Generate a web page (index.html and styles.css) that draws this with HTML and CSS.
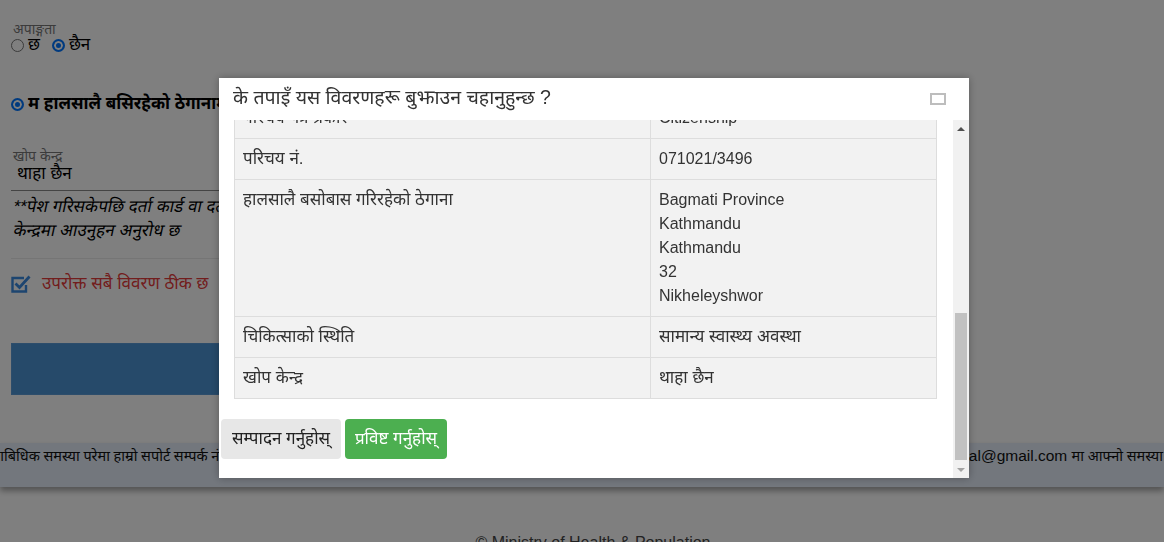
FILE: index.html
```html
<!DOCTYPE html>
<html lang="ne">
<head>
<meta charset="utf-8">
<title>खोप दर्ता</title>
<link rel="stylesheet" href="styles.css">
</head>
<body>
<div class="page">
  <div class="form">
    <div class="field-label">अपाङ्गता</div>
    <div class="radios">
      <label class="radio"><span class="rb"></span>छ</label>
      <label class="radio"><span class="rb on"></span>छैन</label>
    </div>

    <div class="addr-choice"><span class="rb on"></span>म हालसालै बसिरहेको ठेगानामा खोप लिन चाहन्छु</div>

    <div class="field-label gap">खोप केन्द्र</div>
    <div class="input-like">थाहा छैन</div>
    <p class="note"><span class="slant">**पेश गरिसकेपछि दर्ता कार्ड वा दर्ता नम्बर सहित आफ्नो नजिकको खोप</span><br><span class="slant">केन्द्रमा आउनुहन अनुरोध छ</span></p>
    <div class="rule"></div>

    <div class="confirm">
      <svg class="check" width="20" height="18" viewBox="0 0 20 18"><path d="M13 3H1.5v13.5h13.5V10" fill="none" stroke="#3a8ae0" stroke-width="2.4"/><path d="M4.5 8.5l4 4L18.5 1.5" fill="none" stroke="#3a8ae0" stroke-width="2.8"/></svg>
      <span class="confirm-text">उपरोक्त सबै विवरण ठीक छ</span>
    </div>

    <div class="submit-bar"></div>
  </div>

  <div class="support">
    <div class="support-line"><span class="sl-dv">प्राबिधिक समस्या परेमा हाम्रो सपोर्ट सम्पर्क नंः 9851255834, 9851255839 मा वा इमेल</span><span class="sl-mail">covid19vaccinenepal@gmail.com <span class="sl-dv2">मा आफ्नो समस्या राख्नुहोला ।</span></span></div>
  </div>

  <div class="copyright">© Ministry of Health &amp; Population</div>
</div>

<div class="overlay"></div>

<div class="dialog">
  <div class="dialog-head">
    <span class="dialog-title">के तपाइँ यस विवरणहरू बुझाउन चहानुहुन्छ ?</span>
    <svg class="max-icon" width="16" height="12" viewBox="0 0 16 12"><rect x="1" y="1" width="14" height="10" fill="none" stroke="#bdbdbd" stroke-width="2"/></svg>
  </div>
  <div class="dialog-body">
    <div class="scroll-area">
      <div class="scroll-content">
        <table class="details">
          <tr><td class="k">परिचय पत्र प्रकार</td><td class="lat">Citizenship</td></tr>
          <tr><td class="k">परिचय नं.</td><td class="lat">071021/3496</td></tr>
          <tr><td class="k">हालसालै बसोबास गरिरहेको ठेगाना</td><td class="lat">Bagmati Province<br>Kathmandu<br>Kathmandu<br>32<br>Nikheleyshwor</td></tr>
          <tr><td class="k">चिकित्साको स्थिति</td><td>सामान्य स्वास्थ्य अवस्था</td></tr>
          <tr><td class="k">खोप केन्द्र</td><td>थाहा छैन</td></tr>
        </table>
        <div class="actions">
          <button class="btn btn-edit">सम्पादन गर्नुहोस्</button>
          <button class="btn btn-submit">प्रविष्ट गर्नुहोस्</button>
        </div>
      </div>
    </div>
    <div class="scrollbar">
      <div class="sb-btn"><span class="arr up"></span></div>
      <div class="sb-track"><div class="sb-thumb"></div></div>
      <div class="sb-btn"><span class="arr down"></span></div>
    </div>
  </div>
</div>
</body>
</html>
```
FILE: styles.css
```css
* { box-sizing: border-box; }
html, body { margin: 0; padding: 0; }
body {
  background: #fff;
  font-family: "Liberation Sans", "Noto Sans", "Noto Sans Devanagari", sans-serif;
  font-size: 17px;
  line-height: 1.5;
  color: #333;
  width: 1164px;
  height: 542px;
  overflow: hidden;
}

.page { display: flex; flex-direction: column; }

.form { padding: 21px 0 0 11px; width: 920px; }

.field-label { font-size: 14px; line-height: 16px; color: #777; padding-left: 2px; }
.field-label.gap { margin-top: 32px; }

.radios { display: flex; gap: 12px; line-height: 20px; color: #000; margin-top: -2px; }
.radio { display: flex; align-items: center; gap: 4px; }
.rb {
  width: 13px; height: 13px; border-radius: 50%;
  border: 1px solid #767676; background: #fff; display: inline-block; flex: none;
}
.rb.on { border: 2px solid #0075ff; box-shadow: inset 0 0 0 2px #fff; background: #0075ff; }

.addr-choice {
  margin-top: 37px; display: flex; align-items: center; gap: 4px;
  font-weight: bold; color: #000; line-height: 24px; white-space: nowrap;
}

.input-like {
  margin-top: -2px;
  border-bottom: 1px solid #888; padding: 0 0 4px 6px; color: #000;
  line-height: 24px; width: 900px;
}

.note { margin: 4px 0 0 0; line-height: 24px; color: #000; white-space: nowrap; }
.slant { display: inline-block; transform: skewX(-12deg); transform-origin: 0 100%; }

.rule { margin-top: 15px; border-top: 1px solid #eaeaea; width: 900px; }

.confirm { margin-top: 13px; display: flex; align-items: center; gap: 11px; line-height: 24px; }
.check { flex: none; }
.confirm-text { color: #e53b3b; }

.submit-bar { margin-top: 47px; height: 52px; width: 900px; background: #4c94d4; border: 1px solid #5a9ad6; }

.support {
  margin-top: 48px; height: 44px; background: #e6eefa;
  box-shadow: 0 4px 6px rgba(0,0,0,0.35); overflow: hidden;
}
.support-line {
  display: flex; align-items: baseline; white-space: nowrap;
  margin-left: -8px; padding-top: 1px; line-height: 24px; color: #111;
}
.sl-dv { flex: none; width: 845px; font-family: "Liberation Serif", "Noto Sans", serif; font-size: 14.5px; }
.sl-mail { flex: none; font-size: 15.5px; }
.sl-dv2 { font-family: "Liberation Serif", "Noto Sans", serif; font-size: 14.5px; }

.copyright { text-align: center; margin-top: 46px; padding-left: 22px; color: #444; line-height: 20px; font-size: 16px; }

.overlay { position: fixed; inset: 0; background: rgba(0,0,0,0.5); }

.dialog {
  position: fixed; left: 219px; top: 78px; width: 750px; height: 400px;
  background: #fff; display: flex; flex-direction: column;
  box-shadow: 0 0 8px rgba(0,0,0,0.3);
}
.dialog-head {
  height: 42px; flex: none; display: flex; align-items: center; justify-content: space-between;
  padding: 0 23px 2px 14px;
}
.dialog-title { font-size: 19.5px; color: #333; }
.max-icon { display: block; margin-top: 2px; }

.dialog-body { flex: 1; display: flex; min-height: 0; }
.scroll-area { flex: 1; overflow: hidden; padding: 0 2px; }
.scroll-content { margin-top: -23px; }

.details {
  border-collapse: collapse; width: 703px; margin-left: 13px;
  background: #f2f2f2; border: 1px solid #ddd;
}
.details td { border: 1px solid #ddd; padding: 8px; vertical-align: top; line-height: 24px; color: #333; }
.details td.k { width: 416px; }
.details td.lat { font-size: 16px; }

.actions { margin-top: 20px; display: flex; gap: 4px; }
.btn {
  font: inherit; line-height: 24px; height: 40px; border: none; border-radius: 4px;
  padding: 0; cursor: pointer;
}
.btn-edit { background: #e7e7e7; color: #222; width: 120px; }
.btn-submit { background: #4caf50; color: #fff; width: 102px; }

.scrollbar { width: 16px; flex: none; background: #f1f1f1; display: flex; flex-direction: column; }
.sb-btn { height: 17px; display: flex; align-items: center; justify-content: center; flex: none; }
.arr { width: 0; height: 0; border-left: 4px solid transparent; border-right: 4px solid transparent; }
.arr.up { border-bottom: 4px solid #505050; }
.arr.down { border-top: 4px solid #a3a3a3; }
.sb-track { flex: 1; display: flex; flex-direction: column; justify-content: flex-end; padding: 0 2px; }
.sb-thumb { height: 147px; background: #c1c1c1; margin-bottom: 1px; }
```
